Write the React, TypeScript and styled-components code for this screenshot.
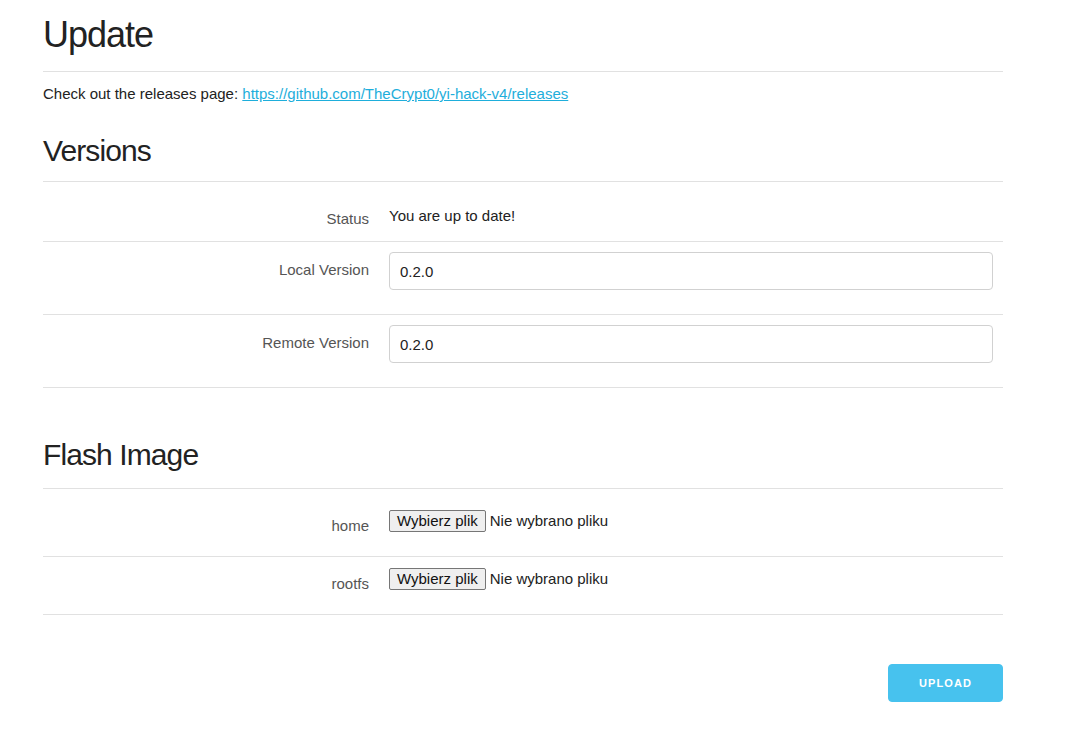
import React from 'react';
import styled, { createGlobalStyle } from 'styled-components';

const GlobalStyle = createGlobalStyle`
  html, body {
    margin: 0;
    padding: 0;
    background: #fff;
  }
  body {
    font-family: "Liberation Sans", Arial, sans-serif;
    font-size: 15px;
    line-height: 24px;
    color: #222;
  }
`;

const Page = styled.div`
  width: 960px;
  margin-left: 43px;
  padding: 12px 0 40px;
`;

const PageTitle = styled.h2`
  margin: 0;
  padding-bottom: 14px;
  border-bottom: 1px solid #e1e1e1;
  font-size: 36px;
  line-height: 45px;
  font-weight: 400;
  letter-spacing: -1px;
  color: #222;
`;

const Intro = styled.p`
  margin: 10px 0 0;
  font-size: 15px;
  line-height: 24px;
`;

const Link = styled.a`
  color: #1eaedb;
  text-decoration: underline;
`;

const SectionTitle = styled.h3<{ $top: number; $gap: number }>`
  margin: ${p => p.$top}px 0 0;
  padding-bottom: ${p => p.$gap}px;
  border-bottom: 1px solid #e1e1e1;
  font-size: 30px;
  line-height: 39px;
  font-weight: 400;
  letter-spacing: -0.9px;
  color: #222;
`;

const Row = styled.div<{ $pt: number; $pb: number }>`
  display: grid;
  grid-template-columns: 326px 1fr;
  column-gap: 20px;
  align-items: start;
  padding: ${p => p.$pt}px 10px ${p => p.$pb}px 0;
  border-bottom: 1px solid #e1e1e1;
`;

// label sits a few px lower than the field without growing the row
const Label = styled.div<{ $offset: number }>`
  margin-top: ${p => p.$offset}px;
  margin-bottom: -${p => p.$offset}px;
  text-align: right;
  font-size: 15px;
  line-height: 24px;
  color: #555;
`;

const Value = styled.div`
  font-size: 15px;
  line-height: 24px;
  color: #222;
`;

const TextInput = styled.input`
  box-sizing: border-box;
  display: block;
  width: 100%;
  height: 38px;
  margin: 0;
  padding: 6px 10px;
  border: 1px solid #d1d1d1;
  border-radius: 4px;
  background: #fff;
  font-family: inherit;
  font-size: 15px;
  color: #222;
  outline: none;
`;

const FilePicker = styled.div`
  display: flex;
  align-items: center;
  gap: 4px;
  height: 22px;
`;

const FileButton = styled.button`
  box-sizing: border-box;
  height: 22px;
  padding: 0 7px;
  border: 1px solid #767676;
  border-radius: 2px;
  background: #efefef;
  font-family: inherit;
  font-size: 15px;
  line-height: 20px;
  color: #111;
  cursor: pointer;
`;

const FileName = styled.span`
  font-size: 15px;
  line-height: 22px;
  color: #222;
`;

const Actions = styled.div`
  display: flex;
  justify-content: flex-end;
  margin-top: 49px;
`;

const PrimaryButton = styled.button`
  height: 38px;
  padding: 0 30px;
  border: 1px solid #47c2ee;
  border-radius: 4px;
  background: #47c2ee;
  color: #fff;
  font-family: inherit;
  font-size: 11px;
  font-weight: 700;
  letter-spacing: 1.1px;
  text-transform: uppercase;
  cursor: pointer;
`;

function FileField() {
  return (
    <FilePicker>
      <FileButton type="button">Wybierz plik</FileButton>
      <FileName>Nie wybrano pliku</FileName>
    </FilePicker>
  );
}

export default function App() {
  return (
    <>
      <GlobalStyle />
      <Page>
        <PageTitle>Update</PageTitle>
        <Intro>
          Check out the releases page:{' '}
          <Link href="#">https://github.com/TheCrypt0/yi-hack-v4/releases</Link>
        </Intro>

        <SectionTitle $top={25} $gap={11}>Versions</SectionTitle>
        <Row $pt={22} $pb={13}>
          <Label $offset={3}>Status</Label>
          <Value>You are up to date!</Value>
        </Row>
        <Row $pt={10} $pb={24}>
          <Label $offset={6}>Local Version</Label>
          <TextInput readOnly value="0.2.0" />
        </Row>
        <Row $pt={10} $pb={24}>
          <Label $offset={6}>Remote Version</Label>
          <TextInput readOnly value="0.2.0" />
        </Row>

        <SectionTitle $top={47} $gap={14}>Flash Image</SectionTitle>
        <Row $pt={21} $pb={22}>
          <Label $offset={4}>home</Label>
          <FileField />
        </Row>
        <Row $pt={11} $pb={22}>
          <Label $offset={4}>rootfs</Label>
          <FileField />
        </Row>

        <Actions>
          <PrimaryButton type="button">Upload</PrimaryButton>
        </Actions>
      </Page>
    </>
  );
}
